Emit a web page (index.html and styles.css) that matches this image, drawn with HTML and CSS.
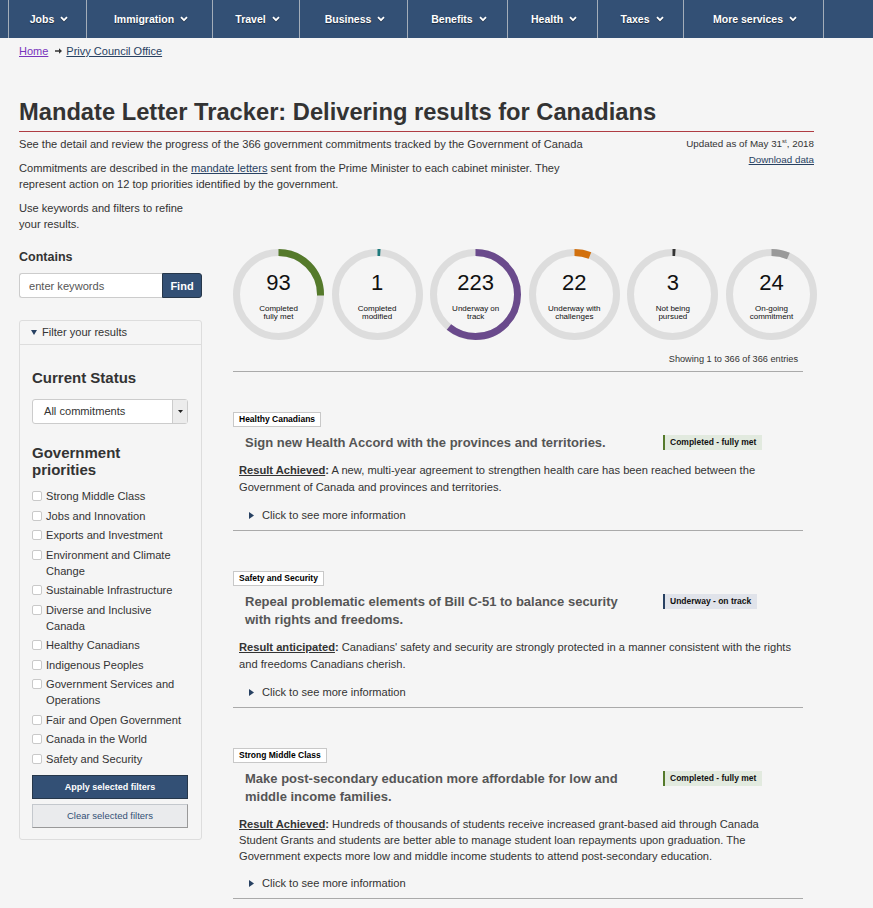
FILE: index.html
```html
<!DOCTYPE html>
<html lang="en">
<head>
<meta charset="utf-8">
<title>Mandate Letter Tracker</title>
<link rel="stylesheet" href="styles.css">
</head>
<body>
<nav class="topnav">
  <ul class="topnav-list">
    <li class="topnav-item">Jobs<svg class="chev" viewBox="0 0 8 6" width="8" height="6"><path d="M1 1.2 4 4.2 7 1.2" fill="none" stroke="#fff" stroke-width="1.8"/></svg></li>
    <li class="topnav-item">Immigration<svg class="chev" viewBox="0 0 8 6" width="8" height="6"><path d="M1 1.2 4 4.2 7 1.2" fill="none" stroke="#fff" stroke-width="1.8"/></svg></li>
    <li class="topnav-item">Travel<svg class="chev" viewBox="0 0 8 6" width="8" height="6"><path d="M1 1.2 4 4.2 7 1.2" fill="none" stroke="#fff" stroke-width="1.8"/></svg></li>
    <li class="topnav-item">Business<svg class="chev" viewBox="0 0 8 6" width="8" height="6"><path d="M1 1.2 4 4.2 7 1.2" fill="none" stroke="#fff" stroke-width="1.8"/></svg></li>
    <li class="topnav-item">Benefits<svg class="chev" viewBox="0 0 8 6" width="8" height="6"><path d="M1 1.2 4 4.2 7 1.2" fill="none" stroke="#fff" stroke-width="1.8"/></svg></li>
    <li class="topnav-item">Health<svg class="chev" viewBox="0 0 8 6" width="8" height="6"><path d="M1 1.2 4 4.2 7 1.2" fill="none" stroke="#fff" stroke-width="1.8"/></svg></li>
    <li class="topnav-item">Taxes<svg class="chev" viewBox="0 0 8 6" width="8" height="6"><path d="M1 1.2 4 4.2 7 1.2" fill="none" stroke="#fff" stroke-width="1.8"/></svg></li>
    <li class="topnav-item">More services<svg class="chev" viewBox="0 0 8 6" width="8" height="6"><path d="M1 1.2 4 4.2 7 1.2" fill="none" stroke="#fff" stroke-width="1.8"/></svg></li>
  </ul>
</nav>

<div class="container breadcrumb">
  <a class="crumb-home" href="#">Home</a>
  <svg class="crumb-arrow" viewBox="0 0 7 6" width="7" height="6"><path d="M0 2.3h4v-2.1l3 2.8-3 2.8v-2.1h-4z" fill="#333"/></svg>
  <a class="crumb-link" href="#">Privy Council Office</a>
</div>

<main class="container">
  <h1 class="page-title">Mandate Letter Tracker: Delivering results for Canadians</h1>

  <div class="intro">
    <div class="intro-text">
      <p>See the detail and review the progress of the 366 government commitments tracked by the Government of Canada</p>
      <p>Commitments are described in the <a class="text-link" href="#">mandate letters</a> sent from the Prime Minister to each cabinet minister. They represent action on 12 top priorities identified by the government.</p>
    </div>
    <div class="intro-meta">
      <div>Updated as of May 31<sup class="sup">st</sup>, 2018</div>
      <a class="text-link" href="#">Download data</a>
    </div>
  </div>

  <div class="layout">
    <aside class="sidebar">
      <p class="sidebar-hint">Use keywords and filters to refine your results.</p>
      <div class="contains-label">Contains</div>
      <div class="search">
        <input class="search-input" type="text" placeholder="enter keywords">
        <button class="search-btn" type="button">Find</button>
      </div>

      <div class="filter-panel">
        <div class="filter-head">
          <svg class="filter-tri" viewBox="0 0 6 5" width="6" height="5"><path d="M0 0h6l-3 5z" fill="#284162"/></svg>
          Filter your results
        </div>
        <div class="filter-body">
          <h2 class="filter-title">Current Status</h2>
          <div class="select">
            <span class="select-text">All commitments</span>
            <span class="select-arrow"><svg viewBox="0 0 5 3" width="5" height="3"><path d="M0 0h5l-2.5 3z" fill="#222"/></svg></span>
          </div>
          <h2 class="filter-title filter-title-second">Government priorities</h2>
          <ul class="checklist">
            <li class="check-item"><span class="checkbox"></span><span>Strong Middle Class</span></li>
            <li class="check-item"><span class="checkbox"></span><span>Jobs and Innovation</span></li>
            <li class="check-item"><span class="checkbox"></span><span>Exports and Investment</span></li>
            <li class="check-item"><span class="checkbox"></span><span>Environment and Climate Change</span></li>
            <li class="check-item"><span class="checkbox"></span><span>Sustainable Infrastructure</span></li>
            <li class="check-item"><span class="checkbox"></span><span>Diverse and Inclusive Canada</span></li>
            <li class="check-item"><span class="checkbox"></span><span>Healthy Canadians</span></li>
            <li class="check-item"><span class="checkbox"></span><span>Indigenous Peoples</span></li>
            <li class="check-item"><span class="checkbox"></span><span>Government Services and Operations</span></li>
            <li class="check-item"><span class="checkbox"></span><span>Fair and Open Government</span></li>
            <li class="check-item"><span class="checkbox"></span><span>Canada in the World</span></li>
            <li class="check-item"><span class="checkbox"></span><span>Safety and Security</span></li>
          </ul>
          <button class="btn-apply" type="button">Apply selected filters</button>
          <button class="btn-clear" type="button">Clear selected filters</button>
        </div>
      </div>
    </aside>

    <section class="results">
      <div class="donuts">
        <div class="donut">
          <svg class="donut-ring" viewBox="0 0 91 91" width="91" height="91"><circle cx="45.5" cy="45.5" r="42" fill="none" stroke="#dddddd" stroke-width="7"/><circle cx="45.5" cy="45.5" r="42" fill="none" stroke="#557a2b" stroke-width="7" pathLength="100" stroke-dasharray="25.4 100" transform="rotate(-90 45.5 45.5)"/></svg>
          <div class="donut-text"><div class="donut-num">93</div><div class="donut-label">Completed<br>fully met</div></div>
        </div>
        <div class="donut">
          <svg class="donut-ring" viewBox="0 0 91 91" width="91" height="91"><circle cx="45.5" cy="45.5" r="42" fill="none" stroke="#dddddd" stroke-width="7"/><circle cx="45.5" cy="45.5" r="42" fill="none" stroke="#1f7a7d" stroke-width="7" pathLength="100" stroke-dasharray="1.1 100" transform="rotate(-90 45.5 45.5)"/></svg>
          <div class="donut-text"><div class="donut-num">1</div><div class="donut-label">Completed<br>modified</div></div>
        </div>
        <div class="donut">
          <svg class="donut-ring" viewBox="0 0 91 91" width="91" height="91"><circle cx="45.5" cy="45.5" r="42" fill="none" stroke="#dddddd" stroke-width="7"/><circle cx="45.5" cy="45.5" r="42" fill="none" stroke="#6a4a8c" stroke-width="7" pathLength="100" stroke-dasharray="60.9 100" transform="rotate(-90 45.5 45.5)"/></svg>
          <div class="donut-text"><div class="donut-num">223</div><div class="donut-label">Underway on<br>track</div></div>
        </div>
        <div class="donut">
          <svg class="donut-ring" viewBox="0 0 91 91" width="91" height="91"><circle cx="45.5" cy="45.5" r="42" fill="none" stroke="#dddddd" stroke-width="7"/><circle cx="45.5" cy="45.5" r="42" fill="none" stroke="#d2700d" stroke-width="7" pathLength="100" stroke-dasharray="6 100" transform="rotate(-90 45.5 45.5)"/></svg>
          <div class="donut-text"><div class="donut-num">22</div><div class="donut-label">Underway with<br>challenges</div></div>
        </div>
        <div class="donut">
          <svg class="donut-ring" viewBox="0 0 91 91" width="91" height="91"><circle cx="45.5" cy="45.5" r="42" fill="none" stroke="#dddddd" stroke-width="7"/><circle cx="45.5" cy="45.5" r="42" fill="none" stroke="#333333" stroke-width="7" pathLength="100" stroke-dasharray="1.1 100" transform="rotate(-90 45.5 45.5)"/></svg>
          <div class="donut-text"><div class="donut-num">3</div><div class="donut-label">Not being<br>pursued</div></div>
        </div>
        <div class="donut">
          <svg class="donut-ring" viewBox="0 0 91 91" width="91" height="91"><circle cx="45.5" cy="45.5" r="42" fill="none" stroke="#dddddd" stroke-width="7"/><circle cx="45.5" cy="45.5" r="42" fill="none" stroke="#999999" stroke-width="7" pathLength="100" stroke-dasharray="6.6 100" transform="rotate(-90 45.5 45.5)"/></svg>
          <div class="donut-text"><div class="donut-num">24</div><div class="donut-label">On-going<br>commitment</div></div>
        </div>
      </div>

      <div class="list">
        <div class="showing">Showing 1 to 366 of 366 entries</div>

        <article class="card">
          <span class="tag">Healthy Canadians</span>
          <div class="card-head">
            <h3 class="card-title">Sign new Health Accord with the provinces and territories.</h3>
            <span class="badge badge-met">Completed - fully met</span>
          </div>
          <p class="card-result"><span class="result-label">Result Achieved</span><b>:</b> A new, multi-year agreement to strengthen health care has been reached between the Government of Canada and provinces and territories.</p>
          <div class="card-more"><svg class="more-tri" viewBox="0 0 5 7" width="5" height="7"><path d="M0 0l5 3.5-5 3.5z" fill="#284162"/></svg>Click to see more information</div>
        </article>

        <article class="card">
          <span class="tag">Safety and Security</span>
          <div class="card-head">
            <h3 class="card-title">Repeal problematic elements of Bill C-51 to balance security with rights and freedoms.</h3>
            <span class="badge badge-track">Underway - on track</span>
          </div>
          <p class="card-result"><span class="result-label">Result anticipated</span><b>:</b> Canadians' safety and security are strongly protected in a manner consistent with the rights and freedoms Canadians cherish.</p>
          <div class="card-more"><svg class="more-tri" viewBox="0 0 5 7" width="5" height="7"><path d="M0 0l5 3.5-5 3.5z" fill="#284162"/></svg>Click to see more information</div>
        </article>

        <article class="card">
          <span class="tag">Strong Middle Class</span>
          <div class="card-head">
            <h3 class="card-title">Make post-secondary education more affordable for low and middle income families.</h3>
            <span class="badge badge-met">Completed - fully met</span>
          </div>
          <p class="card-result card-result-tight"><span class="result-label">Result Achieved</span><b>:</b> Hundreds of thousands of students receive increased grant-based aid through Canada Student Grants and students are better able to manage student loan repayments upon graduation. The Government expects more low and middle income students to attend post-secondary education.</p>
          <div class="card-more"><svg class="more-tri" viewBox="0 0 5 7" width="5" height="7"><path d="M0 0l5 3.5-5 3.5z" fill="#284162"/></svg>Click to see more information</div>
        </article>
      </div>
    </section>
  </div>
</main>
</body>
</html>
```

FILE: styles.css
```css
* { box-sizing: border-box; }

body {
  margin: 0;
  background: #f5f5f5;
  font-family: "Liberation Sans", Arial, Helvetica, sans-serif;
  color: #333;
  font-size: 11.1px;
  line-height: 16px;
}

/* top navigation */
.topnav {
  background: #335075;
  height: 38px;
}
.topnav-list {
  list-style: none;
  margin: 0;
  padding: 0 0 0 8px;
  height: 38px;
  display: grid;
  grid-template-columns: 78px 126px 87px 108px 100px 90px 86px 141px;
}
.topnav-item {
  display: flex;
  align-items: center;
  justify-content: center;
  gap: 6px;
  padding-left: 3px;
  border-left: 1px solid #a3adb9;
  color: #fff;
  font-weight: bold;
  font-size: 10.5px;
  text-shadow: 0 1px 1px rgba(0, 0, 0, 0.5);
}
.topnav-item:last-child { border-right: 1px solid #a3adb9; }
.chev { display: block; filter: drop-shadow(0 1px 0 rgba(0,0,0,0.4)); }

/* layout container */
.container {
  width: 795px;
  margin-left: 19px;
}

/* breadcrumb */
.breadcrumb {
  padding-top: 5px;
  font-size: 11px;
  line-height: 16px;
  display: flex;
  align-items: center;
}
.crumb-home { color: #7834bc; }
.crumb-arrow { margin: 0 4px 0 7px; }
.crumb-link { color: #284162; }

/* title */
.page-title {
  margin: 39px 0 0;
  font-size: 23.7px;
  line-height: 28px;
  font-weight: bold;
  color: #333;
  padding-bottom: 5px;
  border-bottom: 1px solid #af3c43;
}

/* intro */
.intro {
  display: flex;
  justify-content: space-between;
}
.intro-text { width: 578px; }
.intro-text p { margin: 8px 0 0; }
.intro-text p:first-child { margin-top: 4px; }
.text-link { color: #284162; }
.intro-meta {
  margin-top: 4px;
  text-align: right;
  font-size: 9.8px;
  line-height: 16px;
  display: flex;
  flex-direction: column;
  align-items: flex-end;
}
.sup { font-size: 6px; vertical-align: top; line-height: 10px; }

/* two columns */
.layout {
  display: grid;
  grid-template-columns: 183px 1fr;
  column-gap: 31px;
  margin-top: 8px;
}

/* sidebar */
.sidebar-hint { margin: 0; }
.contains-label {
  margin-top: 17px;
  font-weight: bold;
  font-size: 12.5px;
  line-height: 16px;
}
.search {
  margin-top: 8px;
  display: flex;
  height: 25px;
}
.search-input {
  width: 143px;
  height: 25px;
  border: 1px solid #ccc;
  border-right: none;
  border-radius: 3px 0 0 3px;
  background: #fff;
  padding: 0 0 0 9px;
  font-family: inherit;
  font-size: 11.1px;
  color: #555;
}
.search-input::placeholder { color: #555; }
.search-btn {
  width: 40px;
  height: 25px;
  border: 1px solid #26374a;
  border-radius: 0 3px 3px 0;
  background: #335075;
  color: #fff;
  font-family: inherit;
  font-weight: bold;
  font-size: 11px;
  padding: 0;
}

.filter-panel {
  margin-top: 22px;
  border: 1px solid #ddd;
  border-radius: 3px;
}
.filter-head {
  display: flex;
  align-items: center;
  gap: 5px;
  padding: 3px 0 4px 11px;
  line-height: 16px;
  border-bottom: 1px solid #ddd;
  color: #333;
}
.filter-tri { display: block; }
.filter-body { padding: 24px 13px 11px 12px; }
.filter-title {
  margin: 0;
  font-size: 15px;
  line-height: 17px;
  font-weight: bold;
  color: #333;
}
.filter-title-second { margin-top: 20px; }
.select {
  margin-top: 13px;
  height: 25px;
  border: 1px solid #ccc;
  border-radius: 3px;
  background: #fff;
  display: flex;
  align-items: stretch;
}
.select-text {
  flex: 1;
  padding-left: 11px;
  line-height: 23px;
  color: #333;
}
.select-arrow {
  width: 15px;
  background: #ececec;
  border-left: 1px solid #ccc;
  display: flex;
  align-items: center;
  justify-content: center;
}
.select-arrow svg { display: block; }

.checklist {
  list-style: none;
  margin: 10px 0 0;
  padding: 0;
  display: flex;
  flex-direction: column;
  gap: 3.5px;
}
.check-item {
  display: flex;
  align-items: flex-start;
  gap: 4px;
  line-height: 16px;
}
.checkbox {
  flex: 0 0 10px;
  width: 10px;
  height: 10px;
  margin-top: 3px;
  border: 1px solid #c9c9c9;
  border-radius: 2px;
  background: #fff;
}
.btn-apply, .btn-clear {
  display: block;
  width: 100%;
  height: 24px;
  font-family: inherit;
  padding: 0;
}
.btn-apply {
  margin-top: 8px;
  background: #335075;
  border: 1px solid #26374a;
  color: #fff;
  font-weight: bold;
  font-size: 9px;
}
.btn-clear {
  margin-top: 5px;
  background: #eaebed;
  border: 1px solid #c4c8cd;
  border-right-color: #999;
  border-bottom-color: #999;
  color: #335075;
  font-size: 9.5px;
}

/* donuts */
.donuts {
  margin-top: 49px;
  display: flex;
  gap: 7.6px;
}
.donut {
  width: 91px;
  height: 91px;
  display: grid;
  flex: 0 0 91px;
}
.donut-ring, .donut-text { grid-area: 1 / 1; }
.donut-ring { display: block; }
.donut-text {
  align-self: center;
  text-align: center;
  color: #111;
  padding-top: 2px;
}
.donut-num {
  font-size: 22px;
  line-height: 24px;
}
.donut-label {
  margin-top: 10px;
  font-size: 8px;
  line-height: 8px;
}

/* list */
.list { width: 570px; }
.showing {
  margin-top: 11px;
  text-align: right;
  font-size: 9.2px;
  line-height: 16px;
  padding: 0 5px 4px 0;
  border-bottom: 1px solid #aaa;
}
.card {
  padding: 40px 0 7px;
  border-bottom: 1px solid #aaa;
}
.tag {
  display: block;
  width: max-content;
  background: #fff;
  border: 1px solid #c8c8c8;
  padding: 1px 5px;
  font-size: 8.5px;
  line-height: 11px;
  font-weight: bold;
  color: #000;
}
.card-head {
  display: flex;
  align-items: flex-start;
  margin-top: 7px;
  padding-left: 12px;
}
.card-title {
  margin: 0;
  width: 390px;
  flex: 0 0 390px;
  font-size: 13px;
  line-height: 18px;
  font-weight: bold;
  color: #555;
}
.badge {
  margin: 1px 0 0 28px;
  padding: 2px 6px 2px 5px;
  font-size: 8.5px;
  line-height: 11px;
  font-weight: bold;
  color: #111;
  border-left: 2px solid;
  white-space: nowrap;
}
.badge-met { background: #e2eadf; border-left-color: #557a2b; }
.badge-track { background: #e0e3ea; border-left-color: #284162; }

.card-result {
  margin: 10px 0 0 6px;
  width: 556px;
  font-size: 11.15px;
  line-height: 17px;
}
.card-result-tight { line-height: 16px; }
.result-label {
  font-weight: bold;
  text-decoration: underline;
}
.card-more {
  margin-top: 11px;
  padding-left: 16px;
  display: flex;
  align-items: center;
  gap: 8px;
  line-height: 16px;
}
.more-tri { display: block; }
```
